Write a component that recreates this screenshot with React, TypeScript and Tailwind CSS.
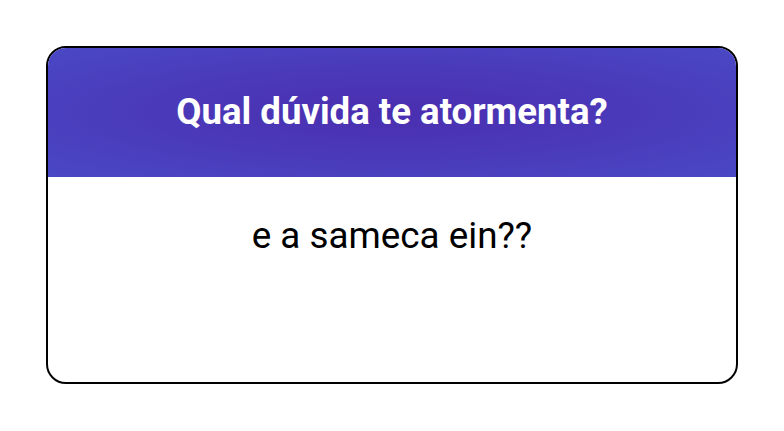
export default function App() {
  return (
    <div className="min-h-screen bg-white pt-[46px] px-[46px]" style={{ fontFamily: 'Roboto, sans-serif' }}>
      <div className="h-[338px] overflow-hidden rounded-[20px] border-2 border-black flex flex-col">
        <div className="h-[129px] flex items-center justify-center bg-[radial-gradient(ellipse_at_center,#4a2eb0_0%,#4a3ab9_50%,#4a48c5_100%)]">
          <h1 className="text-[36.6px] font-bold text-white leading-none">Qual dúvida te atormenta?</h1>
        </div>
        <div className="flex-1 flex justify-center pt-[41px]">
          <p className="text-[36.8px] text-black leading-none">e a sameca ein??</p>
        </div>
      </div>
    </div>
  );
}
